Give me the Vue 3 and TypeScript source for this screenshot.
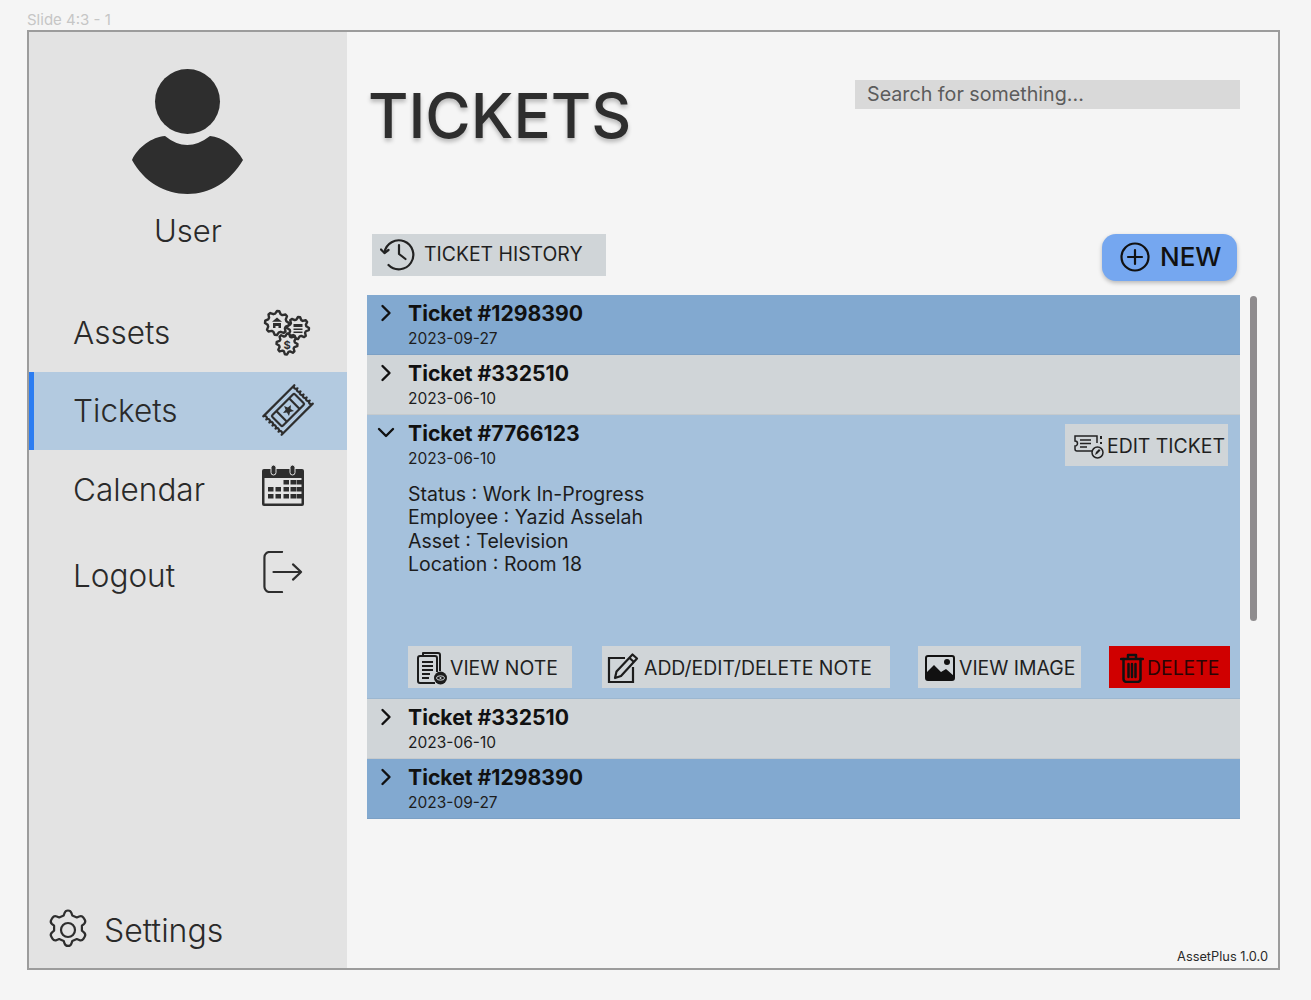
<template>
  <div class="page">
    <div class="slide-label">Slide 4:3 - 1</div>
    <div class="frame">
      <aside class="sidebar">
        <div class="profile">
          <svg class="avatar" width="112" height="126" viewBox="0 0 112 126">
            <circle cx="55.5" cy="32.5" r="32.5" fill="#2e2e2e" />
            <path d="M0 91C6 78 20 68 33 67Q55 85 78 67C90 68 104 78 111 91C98 113 78 125 55.5 125C33 125 12 113 0 91Z" fill="#2e2e2e" />
          </svg>
          <div class="user-name">User</div>
        </div>

        <nav class="nav">
          <a class="nav-item item-assets">
            <span>Assets</span>
            <svg class="nav-icon" width="48" height="47" viewBox="0 0 48 47" fill="none" stroke="#2e2e2e" stroke-width="2.4" stroke-linejoin="round">
              <path :d="gear(35, 19, 9.5, 8.5, 8)" />
              <path :d="gear(14, 14, 10.5, 9.5, 8)" fill="#e3e3e3" />
              <path :d="gear(24, 35, 9, 8, 8)" fill="#e3e3e3" />
              <path d="M14 8.500l-5 4.200h10zM10 14h8v5h-2.500v-2h-3v2H10z" fill="#2e2e2e" stroke="none" />
              <path d="M30.500 15h9v3h-9zM30.500 19.500h9v1.500h-9zM30.500 22.500h9v1.500h-9z" fill="#2e2e2e" stroke="none" />
              <text x="24" y="39.500" class="dollar">$</text>
            </svg>
          </a>
          <a class="nav-item item-tickets active">
            <span>Tickets</span>
            <svg class="nav-icon" width="52" height="52" viewBox="0 0 52 52" fill="none" stroke="#2e2e2e" stroke-width="2.2" stroke-linejoin="round">
              <g transform="rotate(-45 26 26)">
                <path d="M4 13H48a2.170 2.170 0 0 0 0 4.330 2.170 2.170 0 0 0 0 4.330 2.170 2.170 0 0 0 0 4.340 2.170 2.170 0 0 0 0 4.330 2.170 2.170 0 0 0 0 4.330 2.170 2.170 0 0 0 0 4.340H4a2.170 2.170 0 0 0 0-4.340 2.170 2.170 0 0 0 0-4.330 2.170 2.170 0 0 0 0-4.330 2.170 2.170 0 0 0 0-4.340 2.170 2.170 0 0 0 0-4.330 2.170 2.170 0 0 0 0-4.330z" />
                <rect x="10" y="18.500" width="32" height="15" rx="1.500" />
                <path d="M17 18.500v15M35 18.500v15" />
                <path d="M26 20.500l1.600 3.700 4 .3-3 2.600 1 3.900-3.600-2.100-3.600 2.100 1-3.900-3-2.600 4-.3z" fill="#2e2e2e" stroke="none" />
              </g>
            </svg>
          </a>
          <a class="nav-item item-calendar">
            <span>Calendar</span>
            <svg class="nav-icon" width="44" height="42" viewBox="0 0 44 42">
              <path d="M3 4h38a2 2 0 0 1 2 2v33a2 2 0 0 1-2 2H3a2 2 0 0 1-2-2V6a2 2 0 0 1 2-2z" fill="#2e2e2e" />
              <rect x="3.5" y="13" width="37" height="25.5" fill="#e3e3e3" />
              <rect x="10" y="0" width="5" height="10" rx="2.5" fill="#2e2e2e" stroke="#e3e3e3" stroke-width="1" />
              <rect x="29" y="0" width="5" height="10" rx="2.5" fill="#2e2e2e" stroke="#e3e3e3" stroke-width="1" />
              <rect v-for="c in calendarCells" :key="c.x + '-' + c.y" :x="c.x" :y="c.y" width="5.500" height="4.500" fill="#2e2e2e" />
            </svg>
          </a>
          <a class="nav-item item-logout">
            <span>Logout</span>
            <svg class="nav-icon" width="40" height="42" viewBox="0 0 42 44" fill="none" stroke="#2e2e2e" stroke-width="2.300" stroke-linecap="round" stroke-linejoin="round">
              <path d="M20 1H7a5.500 5.500 0 0 0-5.500 5.500v31A5.500 5.500 0 0 0 7 43h13" />
              <path d="M11 22h29M31.500 14l8.500 8-8.500 8" />
            </svg>
          </a>
        </nav>

        <a class="settings">
          <svg width="42" height="42" viewBox="0 0 42 42" fill="none" stroke="#2e2e2e" stroke-width="2.2" stroke-linejoin="round">
            <path d="M21 1.500c1.700 0 3 1 3.500 2.600l.8 2.400 4.500 1.900 2.400-1c1.600-.7 3.300-.2 4.200 1.200l1.300 2.100c.9 1.500.5 3.300-.8 4.400l-2 1.600v5l2 1.600c1.300 1.100 1.700 2.900.8 4.400l-1.300 2.100c-.9 1.400-2.600 1.900-4.200 1.200l-2.400-1-4.500 1.900-.8 2.400c-.5 1.600-1.800 2.600-3.500 2.600s-3-1-3.500-2.600l-.8-2.400-4.500-1.900-2.400 1c-1.600.7-3.300.2-4.200-1.200l-1.300-2.100c-.9-1.500-.5-3.300.8-4.400l2-1.600v-5l-2-1.600c-1.300-1.100-1.700-2.900-.8-4.400l1.300-2.100c.9-1.400 2.600-1.900 4.200-1.200l2.400 1 4.500-1.900.8-2.400c.5-1.600 1.800-2.600 3.500-2.600z" />
            <circle cx="21" cy="21" r="7" />
          </svg>
          <span>Settings</span>
        </a>
      </aside>

      <main class="main">
        <header class="top">
          <h1 class="title">TICKETS</h1>
          <input class="search" type="text" placeholder="Search for something..." />
        </header>

        <div class="toolbar">
          <button class="btn history" type="button">
            <svg width="36" height="34" viewBox="0 0 36 34" fill="none" stroke="#222" stroke-width="2.2" stroke-linecap="round" stroke-linejoin="round">
              <path d="M4.500 15.500A14.500 14.500 0 1 1 8.500 28" />
              <path d="M1 12.500l3.500 3.500 4-3" />
              <path d="M19 8v9l6.500 5" />
            </svg>
            TICKET HISTORY
          </button>
          <button class="new" type="button">
            <svg width="32" height="32" viewBox="0 0 32 32" fill="none" stroke="#111" stroke-width="2.200" stroke-linecap="round">
              <circle cx="16" cy="16" r="13.500" />
              <path d="M16 9v14M9 16h14" />
            </svg>
            NEW
          </button>
        </div>

        <div class="list-wrap">
          <div class="list">
            <section v-for="t in tickets" :key="t.key" class="ticket" :class="t.tone">
              <svg class="chevron" width="20" height="20" viewBox="0 0 20 20" fill="none" stroke="#111" stroke-width="2.400" stroke-linecap="round" stroke-linejoin="round">
                <path :d="t.open ? 'M3 6l7 7 7-7' : 'M6.500 3l7 7-7 7'" />
              </svg>
              <div class="ticket-body">
                <div class="ticket-title">Ticket #{{ t.id }}</div>
                <div class="ticket-date">{{ t.date }}</div>
                <template v-if="t.open">
                  <div class="details">
                    <div>Status : Work In-Progress</div>
                    <div>Employee : Yazid Asselah</div>
                    <div>Asset : Television</div>
                    <div>Location : Room 18</div>
                  </div>
                  <div class="actions">
                    <button class="btn view-note" type="button">
                      <svg width="32" height="34" viewBox="0 0 32 34" fill="none" stroke="#1c1c1c" stroke-width="2" stroke-linejoin="round">
                        <path d="M7 5V2h15a2 2 0 0 1 2 2v16" />
                        <path d="M19 32H4a2 2 0 0 1-2-2V7a2 2 0 0 1 2-2h15a2 2 0 0 1 2 2v14" />
                        <path d="M6 11h11M6 15h11M6 19h11M6 23h8M6 27h7" stroke-width="1.800" />
                        <circle cx="24.500" cy="27" r="6.500" fill="#1c1c1c" stroke="none" />
                        <ellipse cx="24.500" cy="27" rx="4" ry="2.200" stroke="#d0d5d8" stroke-width="1" />
                        <circle cx="24.500" cy="27" r="1" fill="#d0d5d8" stroke="none" />
                      </svg>
                      VIEW NOTE
                    </button>
                    <button class="btn add-note" type="button">
                      <svg width="32" height="32" viewBox="0 0 32 32" fill="none" stroke="#1c1c1c" stroke-width="2.200">
                        <path d="M18 6H2v24h24V15" />
                        <path d="M25.500 2.500l4.500 4L14 24l-6 2 1.500-6.500z" stroke-linejoin="round" />
                        <path d="M22.500 6l4.500 4" />
                      </svg>
                      ADD/EDIT/DELETE NOTE
                    </button>
                    <button class="btn view-image" type="button">
                      <svg width="30" height="26" viewBox="0 0 30 26">
                        <rect x="1" y="1" width="28" height="24" rx="2" fill="none" stroke="#111" stroke-width="2" />
                        <path d="M1 25V18l8-8 7 7 5-3 8 7v4z" fill="#111" />
                        <circle cx="22" cy="7" r="3" fill="#111" />
                      </svg>
                      VIEW IMAGE
                    </button>
                    <button class="btn delete" type="button">
                      <svg width="24" height="30" viewBox="0 0 24 30" fill="none" stroke="#111" stroke-width="2.500" stroke-linecap="round" stroke-linejoin="round">
                        <path d="M1 6h22M8 6V2h8v4" />
                        <path d="M3.500 6v20a3 3 0 0 0 3 3h11a3 3 0 0 0 3-3V6" />
                        <path d="M8.500 11v13M12 11v13M15.500 11v13" />
                      </svg>
                      DELETE
                    </button>
                  </div>
                </template>
              </div>
              <button v-if="t.open" class="btn edit" type="button">
                <svg width="30" height="26" viewBox="0 0 30 26" fill="none" stroke="#222" stroke-width="1.500">
                  <path d="M19 18H3a2 2 0 0 1-2-2v-3a2.500 2.500 0 0 0 0-5V3h22v7" />
                  <path d="M6 7h11M6 10.500h11M6 14h7" />
                  <path d="M27 3v3M27 9v2" stroke-width="2" />
                  <circle cx="23.500" cy="19.500" r="5.500" fill="#d0d5d8" />
                  <path d="M21 22l1-3 3-3 1.500 1.500-3 3z" fill="#222" stroke="none" />
                </svg>
                EDIT TICKET
              </button>
            </section>
          </div>
          <div class="scrollbar"></div>
        </div>

        <footer class="version">AssetPlus 1.0.0</footer>
      </main>
    </div>
  </div>
</template>

<script setup lang="ts">
interface Ticket {
  key: number;
  id: string;
  date: string;
  tone: string;
  open?: boolean;
}

const tickets: Ticket[] = [
  { key: 1, id: "1298390", date: "2023-09-27", tone: "blue" },
  { key: 2, id: "332510", date: "2023-06-10", tone: "grey" },
  { key: 3, id: "7766123", date: "2023-06-10", tone: "open", open: true },
  { key: 4, id: "332510", date: "2023-06-10", tone: "grey" },
  { key: 5, id: "1298390", date: "2023-09-27", tone: "blue" },
];

const calendarCells = [
  { x: 22.5, y: 15 }, { x: 29.5, y: 15 }, { x: 35.5, y: 15 },
  { x: 7, y: 22 }, { x: 14.5, y: 22 }, { x: 22.5, y: 22 }, { x: 29.5, y: 22 }, { x: 35.5, y: 22 },
  { x: 7, y: 29 }, { x: 14.5, y: 29 }, { x: 22.5, y: 29 }, { x: 29.5, y: 29 }, { x: 35.5, y: 29 },
];

function gear(cx: number, cy: number, outer: number, inner: number, teeth: number): string {
  const points: string[] = [];
  for (let i = 0; i < teeth * 4; i++) {
    const a = (i / (teeth * 4)) * Math.PI * 2;
    const r = i % 4 < 2 ? outer + 1.5 : inner;
    points.push(`${(cx + r * Math.cos(a)).toFixed(2)} ${(cy + r * Math.sin(a)).toFixed(2)}`);
  }
  return "M" + points.join("L") + "Z";
}
</script>

<style>
body {
  background: #f5f5f5;
}
</style>

<style scoped>
.page {
  width: 1311px;
  height: 1000px;
  box-sizing: border-box;
  background: #f5f5f5;
  font-family: Inter, "Liberation Sans", sans-serif;
  color: #2a2a2a;
  overflow: hidden;
}

.slide-label {
  height: 30px;
  padding: 11px 0 0 27px;
  box-sizing: border-box;
  font-size: 15px;
  line-height: 17px;
  color: #c6c6c6;
}

.frame {
  display: flex;
  width: 1253px;
  height: 940px;
  margin-left: 27px;
  box-sizing: border-box;
  border: 2px solid #9c9c9c;
  background: #f5f5f5;
}

.sidebar {
  display: flex;
  flex-direction: column;
  width: 318px;
  flex: none;
  background: #e3e3e3;
}

.profile {
  display: flex;
  flex-direction: column;
  align-items: center;
  padding-top: 37px;
  height: 262px;
  box-sizing: border-box;
}

.avatar {
  display: block;
}

.user-name {
  margin-top: 16px;
  font-size: 31px;
  line-height: 40px;
  font-weight: 300;
}

.nav {
  display: flex;
  flex-direction: column;
}

.nav-item {
  position: relative;
  display: flex;
  align-items: center;
  justify-content: space-between;
  box-sizing: border-box;
  padding-left: 44px;
  padding-bottom: 2px;
  font-size: 31.5px;
  font-weight: 300;
}

.item-assets {
  height: 78px;
  padding-right: 36px;
}

.item-tickets {
  height: 78px;
  padding-right: 33px;
}

.item-calendar {
  height: 80px;
  padding-right: 42px;
}

.item-logout {
  height: 92px;
  padding-right: 44px;
}

.item-calendar .nav-icon,
.item-logout .nav-icon {
  margin-bottom: 6px;
}

.active {
  background: #b3cae0;
  box-shadow: inset 5px 0 0 #2b7df2;
}

.dollar {
  font-size: 11px;
  font-weight: 700;
  fill: #2e2e2e;
  stroke: none;
  text-anchor: middle;
}

.settings {
  display: flex;
  align-items: center;
  gap: 15px;
  margin-top: auto;
  padding: 0 0 17px 18px;
  font-size: 32px;
  font-weight: 300;
}

.main {
  display: flex;
  flex-direction: column;
  flex: 1;
  min-width: 0;
  padding: 0 10px 0 20px;
}

.top {
  display: flex;
  justify-content: space-between;
  align-items: flex-start;
  height: 202px;
  padding: 48px 28px 0 1px;
  box-sizing: border-box;
}

.title {
  margin: 1px 0 0;
  font-size: 62px;
  line-height: 70px;
  font-weight: 500;
  color: #2e2e2e;
  text-shadow: 0 3px 4px rgb(0 0 0 / 25%);
}

.search {
  width: 385px;
  height: 29px;
  box-sizing: border-box;
  border: 0;
  padding: 0 12px 2px;
  background: #d9d9d9;
  font-family: inherit;
  font-size: 19.7px;
  color: #555;
}

.search::placeholder {
  color: #5c5c5c;
  opacity: 1;
}

.toolbar {
  display: flex;
  justify-content: space-between;
  align-items: flex-start;
  height: 61px;
  padding: 0 31px 0 5px;
}

.btn {
  display: flex;
  align-items: center;
  gap: 2px;
  height: 42px;
  padding: 0;
  border: 0;
  background: #d0d5d8;
  font-family: inherit;
  font-size: 19.4px;
  color: #1f1f1f;
  white-space: nowrap;
}

.history {
  width: 234px;
  gap: 8px;
  padding-left: 8px;
  padding-bottom: 2px;
}

.new {
  display: flex;
  align-items: center;
  gap: 9px;
  width: 135px;
  height: 47px;
  padding: 0 0 2px 17px;
  border: 0;
  border-radius: 14px;
  background: #75a7f0;
  box-shadow: 0 2px 4px rgb(0 0 0 / 25%);
  font-family: inherit;
  font-size: 26px;
  font-weight: 500;
  color: #111;
}

.list-wrap {
  display: flex;
  align-items: flex-start;
  gap: 10px;
}

.list {
  width: 873px;
}

.ticket {
  position: relative;
  display: flex;
  min-height: 60px;
  box-sizing: border-box;
  padding: 5px 0 0 9px;
  border-bottom: 1px solid rgb(0 0 0 / 5%);
}

.blue {
  background: #82a9d0;
}

.grey {
  background: #d0d5d8;
}

.open {
  height: 284px;
  background: #a5c1dc;
}

.chevron {
  flex: none;
  margin-top: 3px;
}

.ticket-body {
  margin-left: 12px;
}

.ticket-title {
  font-size: 21.2px;
  line-height: 26px;
  font-weight: 700;
  color: #111;
}

.ticket-date {
  margin-top: 3px;
  font-size: 15.5px;
  line-height: 19px;
  color: #1c1c1c;
}

.details {
  margin-top: 15px;
  font-size: 19.5px;
  line-height: 23.400px;
  color: #1c1c1c;
}

.actions {
  display: flex;
  gap: 30px;
  width: 823px;
  margin-top: 69px;
}

.actions .btn {
  box-sizing: border-box;
  padding-top: 2px;
}

.view-note {
  width: 164px;
  padding-left: 8px;
}

.add-note {
  width: 288px;
  gap: 5px;
  padding-left: 5px;
}

.view-image {
  width: 163px;
  gap: 4px;
  margin-left: -2px;
  padding-left: 7px;
}

.delete {
  width: 121px;
  gap: 3px;
  margin-left: -2px;
  padding-left: 11px;
  background: #d00000;
  color: #2a0505;
}

.edit {
  position: absolute;
  top: 9px;
  right: 12px;
  box-sizing: border-box;
  width: 163px;
  gap: 3px;
  padding-left: 9px;
  padding-top: 2px;
}

.scrollbar {
  width: 7px;
  height: 325px;
  margin-top: 1px;
  border-radius: 4px;
  background: #8f8c8e;
}

.version {
  margin-top: auto;
  padding: 0 0 3px 0;
  text-align: right;
  font-size: 12.8px;
  line-height: 17px;
  color: #2a2a2a;
}
</style>
